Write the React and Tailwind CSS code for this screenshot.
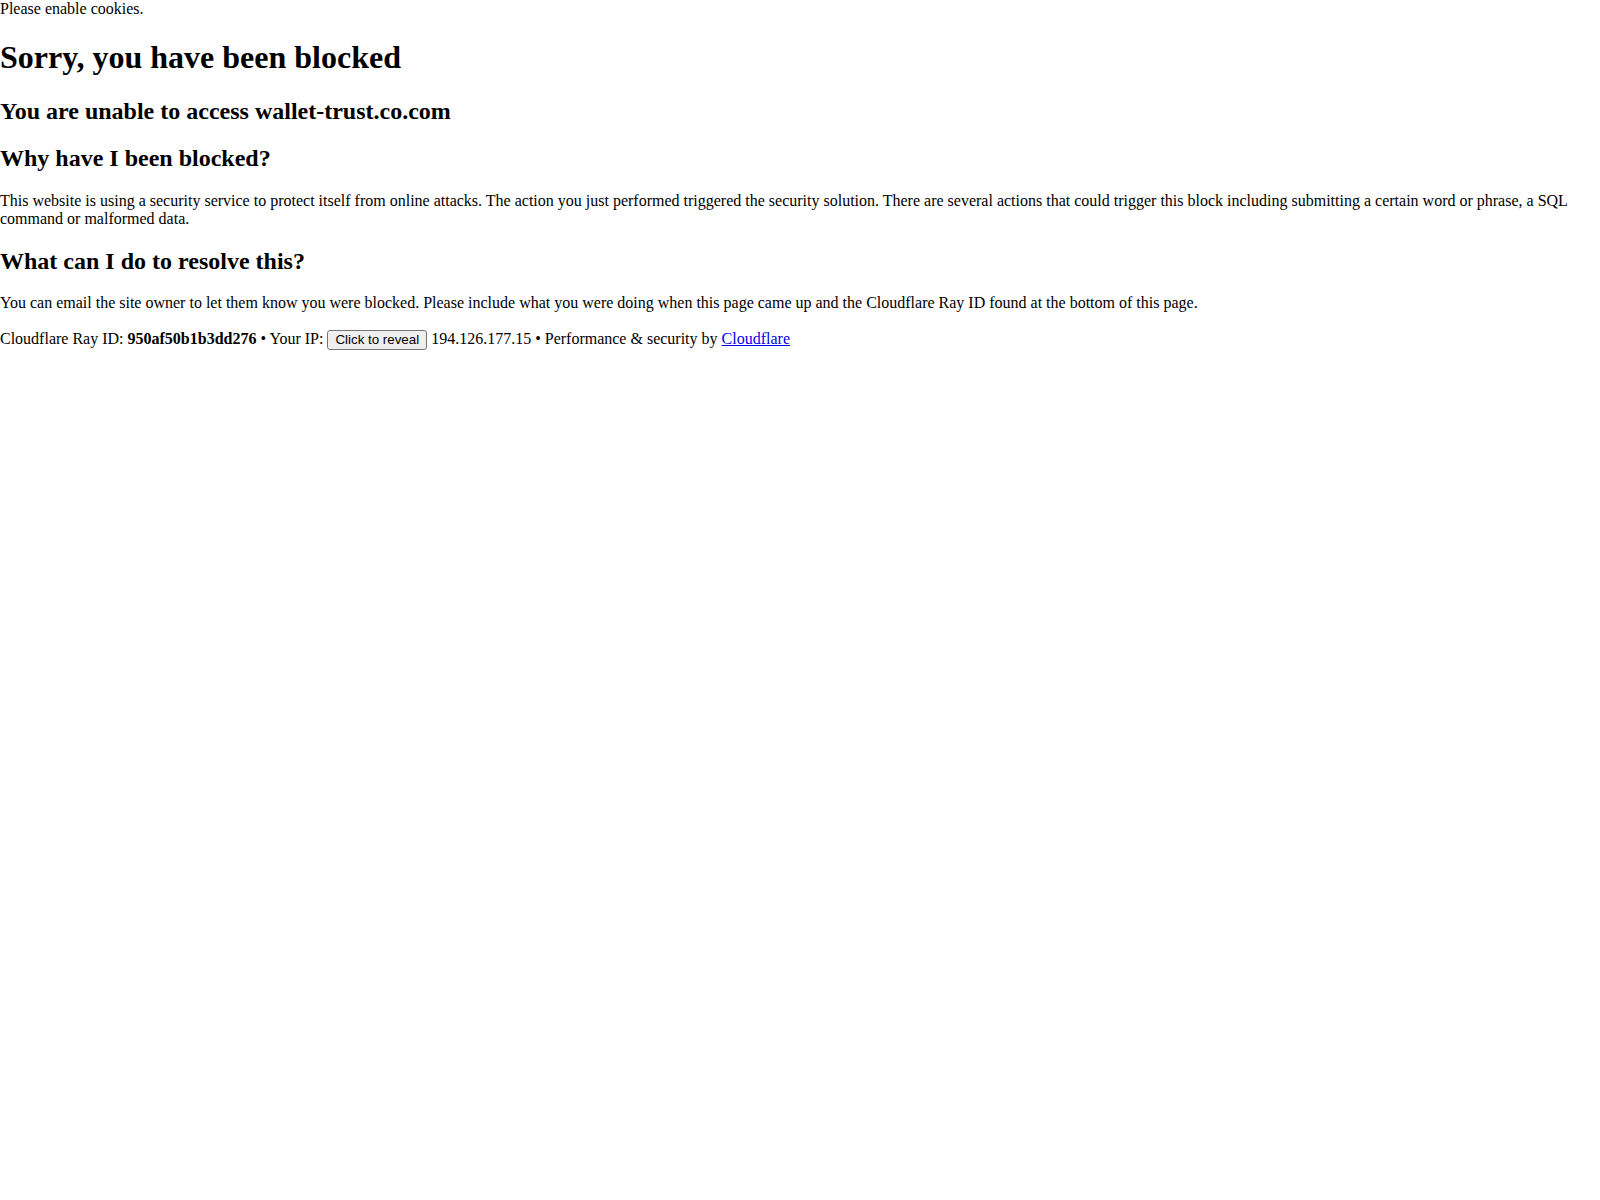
import React from "react";

export default function App() {
  return (
    <div className="bg-white text-black text-[16px] leading-[1.15] font-['Liberation_Serif','Times_New_Roman',serif] min-h-screen">
      <div>Please enable cookies.</div>

      <div>
        <h1 className="text-[32px] font-bold mt-[20.5px] mb-[22px]">Sorry, you have been blocked</h1>
        <h2 className="text-[24px] font-bold my-[19.5px]">
          <span>You are unable to access</span> wallet-trust.co.com
        </h2>
      </div>

      <div className="max-w-[1580px]">
        <h2 className="text-[24px] font-bold my-[19.5px]">Why have I been blocked?</h2>
        <p className="my-[15.5px]">
          This website is using a security service to protect itself from online attacks. The action you just performed
          triggered the security solution. There are several actions that could trigger this block including submitting a
          certain word or phrase, a SQL command or malformed data.
        </p>

        <h2 className="text-[24px] font-bold my-[19px]">What can I do to resolve this?</h2>
        <p className="mt-[16px] mb-[17px]">
          You can email the site owner to let them know you were blocked. Please include what you were doing when this page
          came up and the Cloudflare Ray ID found at the bottom of this page.
        </p>
      </div>

      <p className="my-[17px]">
        <span>
          Cloudflare Ray ID: <strong className="font-bold">950af50b1b3dd276</strong>
        </span>{" "}
        <span>&bull;</span>{" "}
        <span>
          Your IP:{" "}
          <button
            type="button"
            className="font-['Liberation_Sans',Arial,sans-serif] text-[13.33px] leading-[16px] px-[7px] py-[1px] bg-[#efefef] border border-[#767676] rounded-[3px] text-black"
          >
            Click to reveal
          </button>{" "}
          <span>194.126.177.15</span> <span>&bull;</span>
        </span>{" "}
        <span>
          <span>Performance &amp; security by</span>{" "}
          <a href="#" className="text-[#0000ee] underline">
            Cloudflare
          </a>
        </span>
      </p>
    </div>
  );
}
